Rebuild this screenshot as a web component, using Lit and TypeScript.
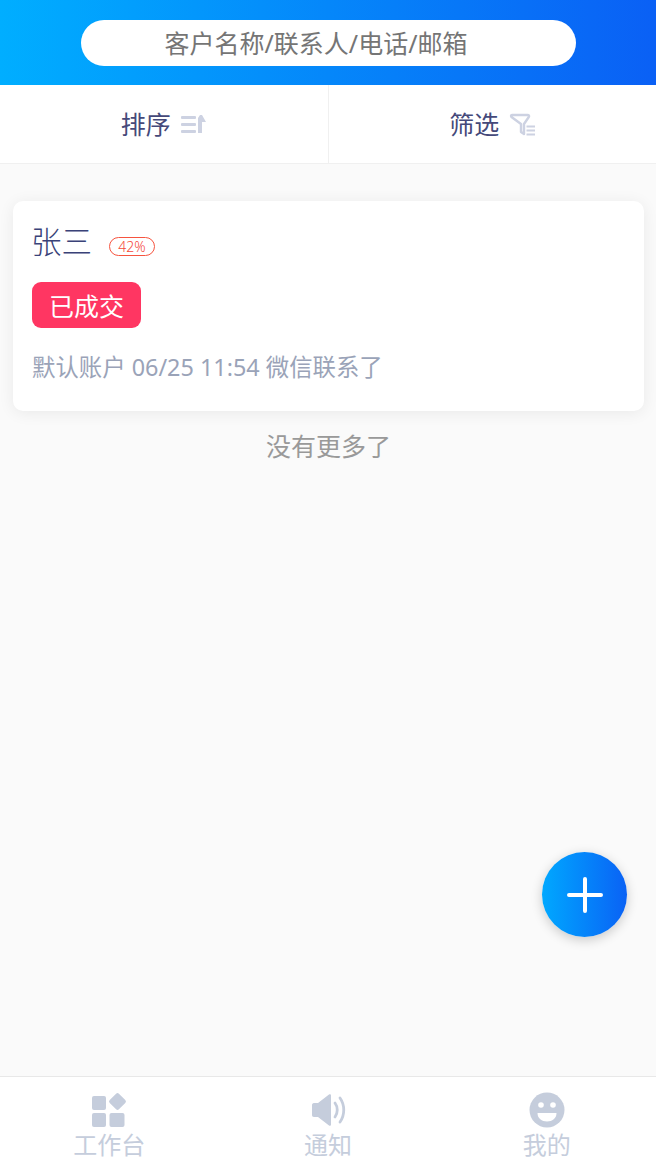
import { css, html, LitElement } from 'lit';
import { customElement } from 'lit/decorators.js';

@customElement('app-root')
export class AppRoot extends LitElement {
  static styles = css`
    :host {
      display: flex;
      flex-direction: column;
      position: relative;
      height: 1167px;
      background: #fafafa;
      font-family: "Noto Sans", "Noto Sans CJK SC", sans-serif;
      font-weight: 400;
      overflow: hidden;
    }
    .top {
      height: 85px;
      flex: none;
      display: flex;
      justify-content: center;
      align-items: flex-start;
      padding-top: 20px;
      box-sizing: border-box;
      background: linear-gradient(90deg, #00aeff, #0a60f5);
    }
    .search {
      width: 495px;
      height: 46px;
      padding: 0 24px 3px 0;
      box-sizing: border-box;
      border-radius: 23px;
      background: #fff;
      display: flex;
      justify-content: center;
      align-items: center;
      font-size: 25px;
      color: #757575;
    }
    .filters {
      height: 79px;
      flex: none;
      display: flex;
      background: #fff;
      border-bottom: 1px solid #f0f0f0;
      box-sizing: border-box;
    }
    .filter {
      flex: 1;
      display: flex;
      justify-content: center;
      align-items: center;
      gap: 10px;
      font-size: 25px;
      color: #45497a;
    }
    .filter span {
      margin-top: -2px;
    }
    .filter + .filter {
      border-left: 1px solid #f0f0f0;
    }
    .list {
      flex: 1;
      padding: 37px 12px 0 13px;
    }
    .card {
      height: 210px;
      box-sizing: border-box;
      padding: 20px 19px;
      background: #fff;
      border-radius: 10px;
      box-shadow: 0 2px 16px rgba(0, 0, 0, 0.07);
    }
    .name-row {
      display: flex;
      align-items: center;
      height: 40px;
    }
    .name {
      margin-left: -1px;
      width: 61px;
      font-size: 30.500px;
      line-height: 38px;
      font-weight: 300;
      color: #3a4278;
    }
    .score {
      margin: 10px 0 0 17px;
      width: 46px;
      height: 19px;
      box-sizing: border-box;
      border: 1px solid #f6543f;
      border-radius: 10px;
      font-size: 14px;
      font-weight: 300;
      line-height: 17px;
      text-align: center;
      color: #f5483a;
    }
    .tag {
      margin-top: 21px;
      width: 109px;
      height: 46px;
      border-radius: 9px;
      background: #ff3662;
      color: #fff;
      font-size: 25px;
      line-height: 48px;
      text-align: center;
    }
    .meta {
      margin-top: 22px;
      font-size: 23.400px;
      line-height: 34px;
      color: #9aa3b8;
      white-space: nowrap;
    }
    .end {
      margin-top: 18px;
      text-align: center;
      font-size: 25px;
      line-height: 34px;
      color: #999;
    }
    .fab {
      position: absolute;
      left: 542px;
      top: 852px;
      width: 85px;
      height: 85px;
      border-radius: 50%;
      background: linear-gradient(90deg, #00a8ff, #0a62f5);
      box-shadow: 0 3px 12px rgba(0, 0, 0, 0.2);
      display: flex;
      justify-content: center;
      align-items: center;
    }
    .nav {
      height: 91px;
      flex: none;
      display: flex;
      background: #fff;
      border-top: 1px solid #e8e8e8;
      box-sizing: border-box;
    }
    .nav-item {
      flex: 1;
      display: flex;
      flex-direction: column;
      align-items: center;
      padding-top: 15px;
      font-size: 24px;
      line-height: 32px;
      color: #c5cddc;
    }
    .nav-item svg {
      display: block;
    }
    .nav-item span {
      margin-top: 1px;
    }
  `;

  render() {
    return html`
      <div class="top"><div class="search">客户名称/联系人/电话/邮箱</div></div>
      <div class="filters">
        <div class="filter">
          <span>排序</span>
          <svg width="26" height="22" viewBox="0 0 26 22" fill="#cdd2e2">
            <rect x="0" y="3" width="15" height="3" rx="1"/>
            <rect x="0" y="10" width="15" height="3" rx="1"/>
            <rect x="0" y="17" width="15" height="3" rx="1"/>
            <path d="M17 20h4V9h4l-4-7h-2l-2 3z"/>
          </svg>
        </div>
        <div class="filter">
          <span>筛选</span>
          <svg width="26" height="26" viewBox="0 0 26 26" fill="none">
            <path d="M3 4h15.500c1.500 0 2 1 1.300 2L15 13v10l-3-2v-8L2.500 6C1.800 5 1.800 4 3 4z" stroke="#cdd2e2" stroke-width="2.400" stroke-linejoin="round"/>
            <path d="M17.500 15.500h8.500M17.500 19.500h8.500M17.500 23.500h8.500" stroke="#cdd2e2" stroke-width="2.200"/>
          </svg>
        </div>
      </div>
      <div class="list">
        <div class="card">
          <div class="name-row"><span class="name">张三</span><span class="score">42%</span></div>
          <div class="tag">已成交</div>
          <div class="meta">默认账户 06/25 11:54 微信联系了</div>
        </div>
        <div class="end">没有更多了</div>
      </div>
      <div class="fab">
        <svg width="36" height="36" viewBox="0 0 36 36" fill="none">
          <path d="M18 2v32M2 18h32" stroke="#fff" stroke-width="4" stroke-linecap="round"/>
        </svg>
      </div>
      <div class="nav">
        <div class="nav-item">
          <svg width="36" height="36" viewBox="0 0 36 36" fill="#c5cddc">
            <rect x="1" y="4" width="14" height="14" rx="2"/>
            <rect x="1" y="21" width="14" height="14" rx="2"/>
            <rect x="18.500" y="21" width="15" height="14" rx="2"/>
            <rect x="20" y="3" width="13" height="13" rx="2" transform="rotate(45 26.500 9.500)"/>
          </svg>
          <span>工作台</span>
        </div>
        <div class="nav-item">
          <svg width="36" height="36" viewBox="0 0 36 36" fill="none">
            <path d="M2 13c0-1 .6-2 2-2h4L19 2.500c1-.8 2-.2 2 1v29c0 1.200-1 1.800-2 1L8 25H4c-1.400 0-2-1-2-2z" fill="#c5cddc"/>
            <path d="M25 11c3 4 3 10 0 14M30 6c5 7 5 17 0 24" stroke="#c5cddc" stroke-width="2.800" stroke-linecap="round"/>
          </svg>
          <span>通知</span>
        </div>
        <div class="nav-item">
          <svg width="36" height="36" viewBox="0 0 36 36">
            <circle cx="18" cy="18" r="17.500" fill="#c5cddc"/>
            <circle cx="12" cy="13" r="2.800" fill="#fff"/>
            <circle cx="24" cy="13" r="2.800" fill="#fff"/>
            <path d="M8.500 21h19c0 5.500-4.300 8.500-9.500 8.500S8.500 26.500 8.500 21z" fill="#fff"/>
          </svg>
          <span>我的</span>
        </div>
      </div>
    `;
  }
}
